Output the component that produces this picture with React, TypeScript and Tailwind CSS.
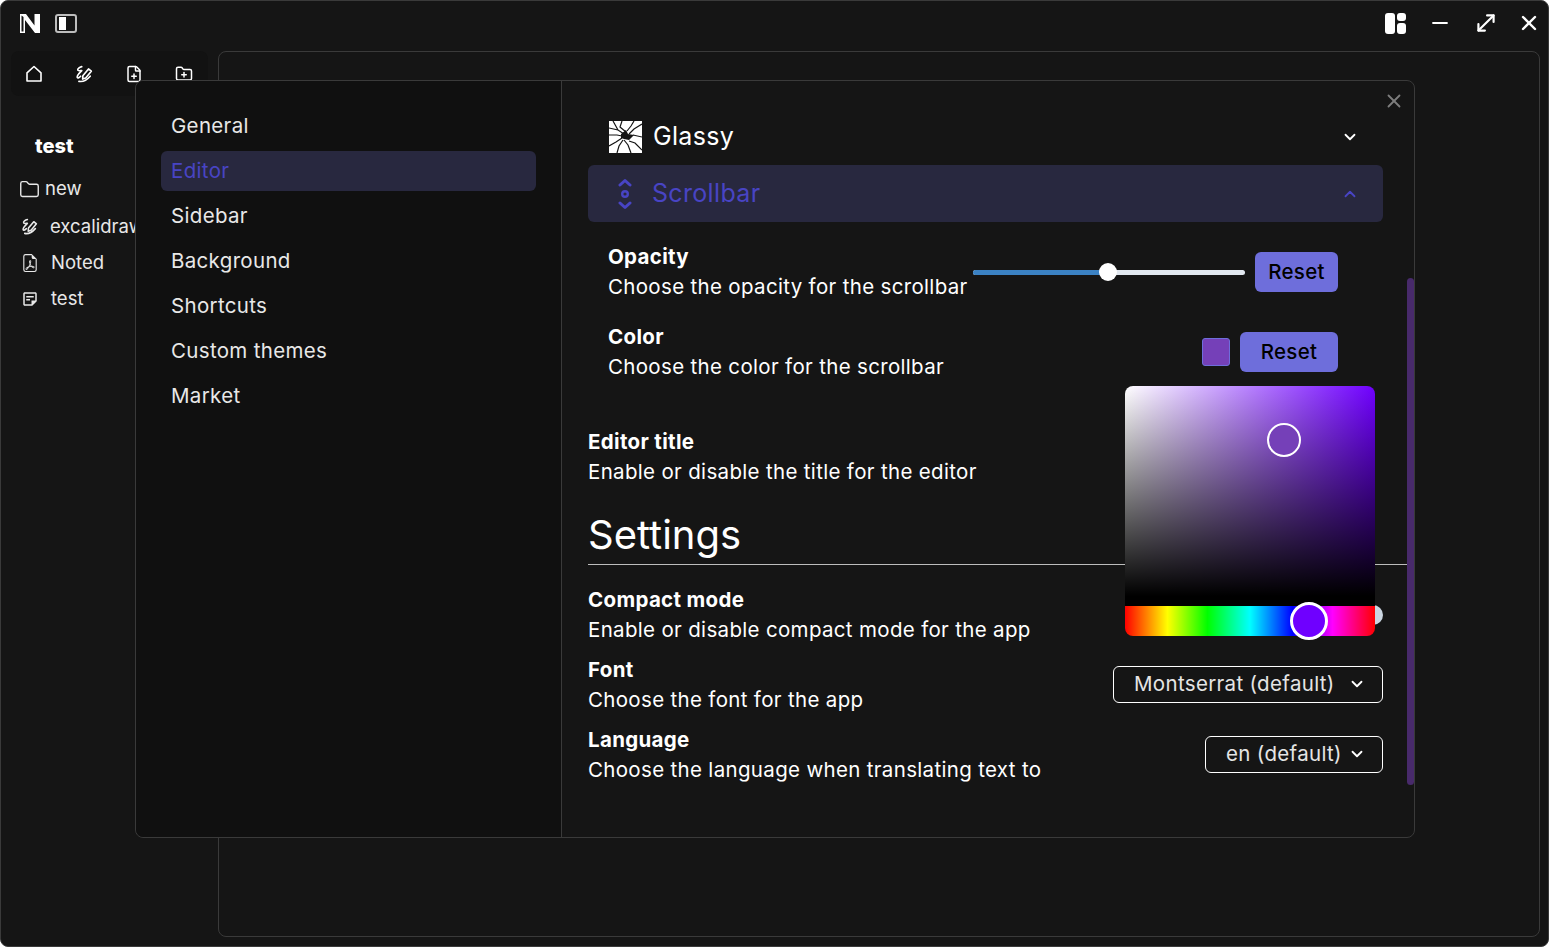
import { ChevronDown, ChevronUp, FilePlus, Folder, FolderPlus, Minus, MoveDiagonal, X } from "lucide-react";
import { BsFileEarmarkPdf } from "react-icons/bs";
import { MdOutlineStickyNote2 } from "react-icons/md";

const menu = ["General", "Editor", "Sidebar", "Background", "Shortcuts", "Custom themes", "Market"];

function ExcalidrawIcon({ className = "" }: { className?: string }) {
  return (
    <svg viewBox="0 0 16 16" fill="none" stroke="currentColor" strokeWidth="1.5" strokeLinecap="round" strokeLinejoin="round" className={className}>
      <path d="M6 1.5 C4 2 2 3.5 2.5 4.5 C3 5.5 5 5 6 5 C4 7 1.5 9.5 2 11 C2.5 12 4 11 5 10" />
      <path d="M7 9.5 L12 3.5 L14.5 5.5 L9.5 11.5 L6.8 12.5 Z" />
      <path d="M3.5 14.5 C6 15 10 14 13.5 10" />
    </svg>
  );
}

function HomeIcon() {
  return (
    <svg viewBox="0 0 18 18" fill="none" stroke="currentColor" strokeWidth="1.6" strokeLinejoin="round" className="size-[18px]">
      <path d="M2 7.8 L9 1.5 L16 7.8 V16 H2 Z" />
    </svg>
  );
}

function LogoN() {
  return (
    <svg viewBox="0 0 20 19" className="h-[19px] w-[20px]" fill="white">
      <path d="M0 0 H6 L14.5 11.5 V0 H20 V19 H15 L5 6 V19 H0 Z M1.5 1.5 V17.5 H3.5 V3 Z" fillRule="evenodd" />
    </svg>
  );
}

function SidebarToggle() {
  return (
    <div className="flex h-[19px] w-[22px] rounded-[3px] border-2 border-[#bdbdbd] p-[1px] pl-[2px]">
      <div className="h-full w-[7px] bg-white" />
    </div>
  );
}

function LayoutIcon() {
  return (
    <div className="flex h-[21px] w-[21px] gap-[2px]">
      <div className="h-full w-[10px] rounded-[3px] bg-white" />
      <div className="flex w-[9px] flex-col gap-[2px]">
        <div className="h-[8px] rounded-[3px] bg-white" />
        <div className="flex-1 rounded-[3px] bg-white" />
      </div>
    </div>
  );
}

function GlassyIcon() {
  return (
    <svg viewBox="0 0 33 32" className="h-[32px] w-[33px] shrink-0">
      <rect width="33" height="32" fill="white" />
      <g fill="none" stroke="#151515" strokeWidth="1.2">
        <path d="M0 7 L9 9 L15 13 M4 0 L9 9 M13 0 L11 6 L17 11 M25 0 L22 5 L18 10 M33 3 L25 8 L20 13 M33 16 L24 14 M33 29 L26 22 L20 20 M22 32 L19 24 L15 19 M8 32 L10 25 L14 19 M0 25 L7 21 L13 17 M0 14 L8 14 L13 15" />
      </g>
      <path d="M12 13 L17 9 L19 13 L25 14 L20 19 L15 18 L12 17 Z" fill="#151515" />
    </svg>
  );
}

function ScrollbarIcon() {
  return (
    <svg viewBox="0 0 14 32" fill="none" stroke="currentColor" strokeWidth="3" strokeLinecap="round" strokeLinejoin="round" className="h-[32px] w-[14px]">
      <path d="M2 7 L7 2.5 L12 7" />
      <circle cx="7" cy="16" r="2.8" strokeWidth="2.4" />
      <path d="M2 25 L7 29.5 L12 25" />
    </svg>
  );
}

function ResetButton({ className }: { className: string }) {
  return (
    <button className={`flex h-[40px] items-center justify-center rounded-md bg-[#6e6edb] text-[20.5px] font-medium text-black ${className}`}>
      Reset
    </button>
  );
}

function Row({ title, description, className = "" }: { title: string; description: string; className?: string }) {
  return (
    <div className={`flex h-[60px] flex-col leading-[30px] text-white ${className}`}>
      <span className="font-bold">{title}</span>
      <span className="whitespace-nowrap">{description}</span>
    </div>
  );
}

function SelectBox({ label, className }: { label: string; className: string }) {
  return (
    <div className={`mb-[2px] flex h-[37px] items-center justify-between rounded-md border border-white pl-[20px] pr-[16px] text-[#e5e5e5] ${className}`}>
      <span>{label}</span>
      <ChevronDown className="size-[18px] text-white" strokeWidth={2.4} />
    </div>
  );
}

function ColorPicker() {
  return (
    <div className="absolute left-[989px] top-[305px] h-[250px] w-[250px] overflow-hidden rounded-lg">
      <div className="relative h-[220px] bg-[linear-gradient(to_top,#000_10px,transparent_100%),linear-gradient(to_right,#fff,#6f00ff)]">
        <div className="absolute left-[142px] top-[37px] size-[34px] rounded-full border-2 border-white bg-[#7540b8]" />
      </div>
      <div className="relative h-[30px] bg-[linear-gradient(to_right,#f00_0%,#ff0_17%,#0f0_33%,#0ff_50%,#00f_67%,#f0f_83%,#f00_100%)]" />
    </div>
  );
}

function SettingsModal() {
  return (
    <div className="absolute left-[134px] top-[79px] flex h-[758px] w-[1280px] rounded-lg border border-[#3a3a3a] bg-[#151515] text-[20.5px] tracking-[0.016em]">
      <nav className="flex w-[426px] shrink-0 flex-col gap-[5px] rounded-l-lg border-r border-[#3a3a3a] bg-[#101010] px-[25px] pt-[25px]">
        {menu.map((item) =>
          item === "Editor" ? (
            <div key={item} className="flex h-[40px] items-center rounded-md bg-[#28283f] px-[10px] text-[#4844c4]">
              {item}
            </div>
          ) : (
            <div key={item} className="flex h-[40px] items-center px-[10px] text-[#e8e8e8]">
              {item}
            </div>
          ),
        )}
      </nav>

      <div className="relative flex-1 pl-[26px] pr-[31px] pt-[28px]">
        <X className="absolute right-[9px] top-[9px] size-[22px] text-[#7d7d7d]" strokeWidth={2} />
        <div className="absolute right-0 top-[197px] h-[507px] w-[7px] rounded-full bg-[#482a6b]" />

        <div className="flex h-[56px] items-center gap-[11px] pl-[21px] pr-[24px] text-[25px] text-white">
          <GlassyIcon />
          <span className="flex-1">Glassy</span>
          <ChevronDown className="size-[18px]" strokeWidth={2.4} />
        </div>
        <div className="flex h-[57px] items-center gap-[20px] rounded-md bg-[#28283f] pl-[30px] pr-[24px] text-[25px] text-[#4844c4]">
          <ScrollbarIcon />
          <span className="flex-1">Scrollbar</span>
          <ChevronUp className="size-[18px]" strokeWidth={2.4} />
        </div>

        <div className="mt-[20px] flex h-[60px] items-center pl-[20px] pr-[45px]">
          <Row title="Opacity" description="Choose the opacity for the scrollbar" className="w-[365px]" />
          <div className="relative h-[5px] w-[272px] rounded-full bg-[#e2e8f0]">
            <div className="h-full w-[135px] rounded-l-full bg-[#3b82c4]" />
            <div className="absolute left-[126px] top-[-7px] size-[18px] rounded-full bg-white" />
          </div>
          <ResetButton className="ml-[10px] w-[83px]" />
        </div>

        <div className="mt-[20px] flex h-[60px] items-center pl-[20px] pr-[45px]">
          <Row title="Color" description="Choose the color for the scrollbar" className="flex-1" />
          <div className="size-[28px] rounded-[3px] border border-[#6e6edb] bg-[#7540b8]" />
          <ResetButton className="ml-[10px] w-[98px]" />
        </div>

        <Row title="Editor title" description="Enable or disable the title for the editor" className="mt-[45px]" />

        <h2 className="mt-[23px] mr-[-25px] h-[55px] border-b border-[#bdbdbd] text-[40px] leading-[50px] tracking-normal text-white">Settings</h2>

        <div className="relative mt-[20px] flex flex-col gap-[10px]">
          <Row title="Compact mode" description="Enable or disable compact mode for the app" />
          <div className="absolute right-0 top-[20px] size-[20px] rounded-full bg-[#cbd5e1]" />
          <div className="flex items-center justify-between">
            <Row title="Font" description="Choose the font for the app" />
            <SelectBox label="Montserrat (default)" className="w-[270px]" />
          </div>
          <div className="flex items-center justify-between">
            <Row title="Language" description="Choose the language when translating text to" />
            <SelectBox label="en (default)" className="w-[178px]" />
          </div>
        </div>
      </div>

      <ColorPicker />
      <div className="absolute left-[1154px] top-[521px] size-[38px] rounded-full border-[3px] border-white bg-[#6f00ff]" />
    </div>
  );
}

export default function App() {
  return (
    <div className="relative h-[947px] w-full overflow-hidden rounded-lg border border-[#3a3a3a] bg-[#151515] font-['Inter','Liberation_Sans',sans-serif] text-white">
      <header className="flex h-[50px] items-center justify-between pb-[6px] pl-[19px] pr-[7px]">
        <div className="flex items-center gap-[15px]">
          <LogoN />
          <SidebarToggle />
        </div>
        <div className="flex items-center">
          <LayoutIcon />
          <Minus className="ml-[22px] size-[24px]" strokeWidth={1.8} />
          <MoveDiagonal className="ml-[21px] size-[26px] -scale-x-100 rotate-90" strokeWidth={2} />
          <X className="ml-[18px] size-[24px]" strokeWidth={2.4} />
        </div>
      </header>

      <div className="flex h-[886px] pr-[8px]">
        <aside className="w-[217px] shrink-0 text-[18.5px]">
          <div className="ml-[10px] flex h-[45px] w-[197px] items-center gap-[32px] rounded-lg bg-[#121212] px-[14px]">
            <HomeIcon />
            <ExcalidrawIcon className="size-[18px]" />
            <FilePlus className="size-[18px]" strokeWidth={2} />
            <FolderPlus className="size-[18px]" strokeWidth={2} />
          </div>
          <div className="ml-[34px] mt-[35px] text-[20px] font-extrabold">test</div>
          <div className="mt-[16px] flex flex-col gap-[12px] pl-[18px] text-[#e8e8e8]">
            <div className="mb-[1px] flex h-[24px] items-center gap-[5px]">
              <Folder className="size-[21px]" strokeWidth={1.6} />
              new
            </div>
            <div className="flex h-[24px] items-center gap-[12px] pl-[2px] pt-[1px]">
              <ExcalidrawIcon className="size-[17px]" />
              excalidraw
            </div>
            <div className="flex h-[24px] items-center gap-[12px] pl-[2px] pt-[1px]">
              <BsFileEarmarkPdf className="size-[18px]" />
              Noted
            </div>
            <div className="flex h-[24px] items-center gap-[12px] pl-[2px] pt-[1px]">
              <MdOutlineStickyNote2 className="size-[18px]" />
              test
            </div>
          </div>
        </aside>
        <main className="flex-1 rounded-lg border border-[#3a3a3a]" />
      </div>

      <SettingsModal />
    </div>
  );
}
